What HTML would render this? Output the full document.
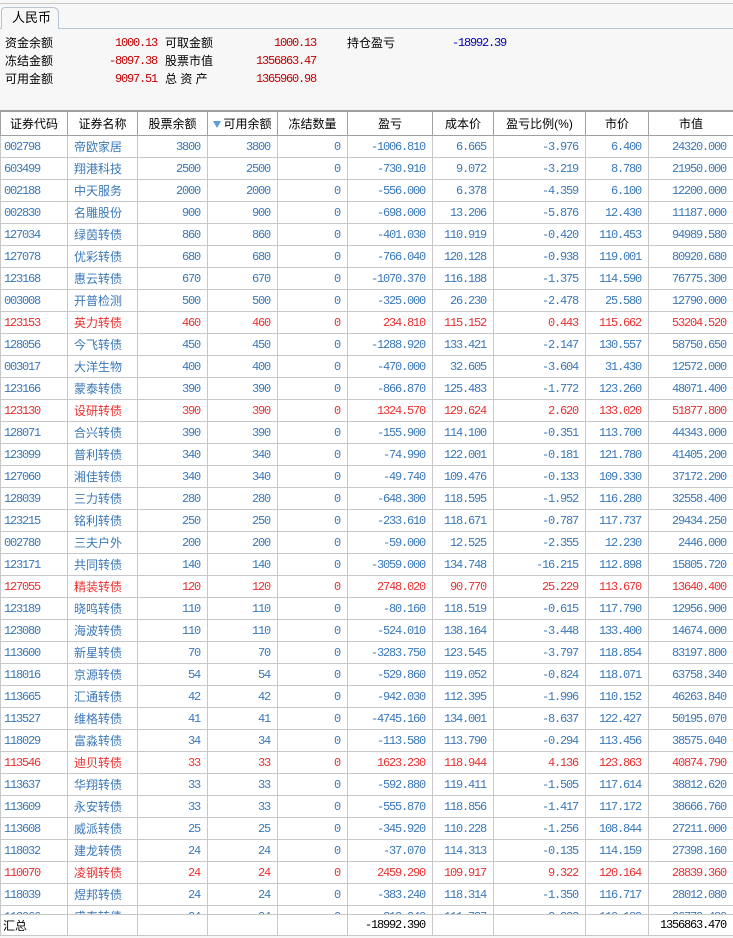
<!DOCTYPE html>
<html><head><meta charset="utf-8">
<style>
*{margin:0;padding:0;box-sizing:border-box}
body{width:733px;height:938px;overflow:hidden;background:#f7f7f7;font-family:"Liberation Sans","Noto Sans CJK SC",sans-serif;position:relative}
.tabline{position:absolute;left:0;top:3px;width:733px;height:1px;background:#c8c8c8}
.tab{position:absolute;left:1px;top:7px;width:58px;height:22px;border:1px solid #b8c4d4;border-bottom:none;border-radius:4px 6px 0 0;background:#f7f7f7;font-size:13px;line-height:20px;padding-left:10px;color:#000}
.tabbase{position:absolute;left:0;top:28px;width:733px;height:1px;background:#b8c4d4}
.s{position:absolute;font-size:12px;line-height:16px;white-space:nowrap}
.v{font-family:"Liberation Mono",monospace;font-size:12px;letter-spacing:-1.2px;color:#c00000;text-align:right}
table{position:absolute;left:0;border-collapse:collapse;table-layout:fixed;background:#fff}
td{height:22px;border:1px solid #c8c8c8;font-family:"Liberation Mono",monospace;font-size:12px;letter-spacing:-1.2px;color:#3a78b8;text-align:right;padding-right:7px;white-space:nowrap;overflow:hidden}
td:nth-child(1){text-align:left;padding-left:3px}
td:nth-child(2){text-align:left;padding-left:6px;font-family:"Liberation Sans","Noto Sans CJK SC",sans-serif;font-size:12px;letter-spacing:0}
tr.r td{color:#e83030}
#hd td{height:24px;background:#fff;color:#000;font-family:"Liberation Sans","Noto Sans CJK SC",sans-serif;font-size:12px;letter-spacing:0;text-align:center;padding:0;border-color:#a0a0a0}
#wrap{position:absolute;left:0;top:111px;width:733px;height:804px;overflow:hidden}
#ft td{height:21px;color:#000;background:#fff}
.tri{display:inline-block;width:0;height:0;border-left:4px solid transparent;border-right:4px solid transparent;border-top:7px solid #5a9ee0;margin-right:2px;vertical-align:0px}
</style></head><body>
<div class="tabline"></div>
<div class="tabbase"></div>
<div class="tab">人民币</div>
<div class="s" style="left:5px;top:35px">资金余额</div>
<div class="s" style="left:5px;top:53px">冻结金额</div>
<div class="s" style="left:5px;top:71px">可用金额</div>
<div class="s v" style="left:80px;width:77px;top:35px">1000.13</div>
<div class="s v" style="left:80px;width:77px;top:53px">-8097.38</div>
<div class="s v" style="left:80px;width:77px;top:71px">9097.51</div>
<div class="s" style="left:165px;top:35px">可取金额</div>
<div class="s" style="left:165px;top:53px">股票市值</div>
<div class="s" style="left:165px;top:71px">总 资 产</div>
<div class="s v" style="left:220px;width:96px;top:35px">1000.13</div>
<div class="s v" style="left:220px;width:96px;top:53px">1356863.47</div>
<div class="s v" style="left:220px;width:96px;top:71px">1365960.98</div>
<div class="s" style="left:347px;top:35px">持仓盈亏</div>
<div class="s v" style="left:440px;width:66px;top:35px;color:#0000b0">-18992.39</div>
<div style="position:absolute;left:0;top:110px;width:733px;height:1px;background:#a0a0a0"></div>
<div id="wrap">
<table style="top:0;width:733px">
<colgroup><col style="width:67px"><col style="width:70px"><col style="width:70px"><col style="width:70px"><col style="width:70px"><col style="width:85px"><col style="width:61px"><col style="width:92px"><col style="width:63px"><col style="width:85px"></colgroup>
<tr id="hd"><td>证券代码</td><td>证券名称</td><td>股票余额</td><td><span class="tri"></span>可用余额</td><td>冻结数量</td><td>盈亏</td><td>成本价</td><td>盈亏比例(%)</td><td>市价</td><td>市值</td></tr>
<tr><td>002798</td><td>帝欧家居</td><td>3800</td><td>3800</td><td>0</td><td>-1006.810</td><td>6.665</td><td>-3.976</td><td>6.400</td><td>24320.000</td></tr>
<tr><td>603499</td><td>翔港科技</td><td>2500</td><td>2500</td><td>0</td><td>-730.910</td><td>9.072</td><td>-3.219</td><td>8.780</td><td>21950.000</td></tr>
<tr><td>002188</td><td>中天服务</td><td>2000</td><td>2000</td><td>0</td><td>-556.000</td><td>6.378</td><td>-4.359</td><td>6.100</td><td>12200.000</td></tr>
<tr><td>002830</td><td>名雕股份</td><td>900</td><td>900</td><td>0</td><td>-698.000</td><td>13.206</td><td>-5.876</td><td>12.430</td><td>11187.000</td></tr>
<tr><td>127034</td><td>绿茵转债</td><td>860</td><td>860</td><td>0</td><td>-401.030</td><td>110.919</td><td>-0.420</td><td>110.453</td><td>94989.580</td></tr>
<tr><td>127078</td><td>优彩转债</td><td>680</td><td>680</td><td>0</td><td>-766.040</td><td>120.128</td><td>-0.938</td><td>119.001</td><td>80920.680</td></tr>
<tr><td>123168</td><td>惠云转债</td><td>670</td><td>670</td><td>0</td><td>-1070.370</td><td>116.188</td><td>-1.375</td><td>114.590</td><td>76775.300</td></tr>
<tr><td>003008</td><td>开普检测</td><td>500</td><td>500</td><td>0</td><td>-325.000</td><td>26.230</td><td>-2.478</td><td>25.580</td><td>12790.000</td></tr>
<tr class="r"><td>123153</td><td>英力转债</td><td>460</td><td>460</td><td>0</td><td>234.810</td><td>115.152</td><td>0.443</td><td>115.662</td><td>53204.520</td></tr>
<tr><td>128056</td><td>今飞转债</td><td>450</td><td>450</td><td>0</td><td>-1288.920</td><td>133.421</td><td>-2.147</td><td>130.557</td><td>58750.650</td></tr>
<tr><td>003017</td><td>大洋生物</td><td>400</td><td>400</td><td>0</td><td>-470.000</td><td>32.605</td><td>-3.604</td><td>31.430</td><td>12572.000</td></tr>
<tr><td>123166</td><td>蒙泰转债</td><td>390</td><td>390</td><td>0</td><td>-866.870</td><td>125.483</td><td>-1.772</td><td>123.260</td><td>48071.400</td></tr>
<tr class="r"><td>123130</td><td>设研转债</td><td>390</td><td>390</td><td>0</td><td>1324.570</td><td>129.624</td><td>2.620</td><td>133.020</td><td>51877.800</td></tr>
<tr><td>128071</td><td>合兴转债</td><td>390</td><td>390</td><td>0</td><td>-155.900</td><td>114.100</td><td>-0.351</td><td>113.700</td><td>44343.000</td></tr>
<tr><td>123099</td><td>普利转债</td><td>340</td><td>340</td><td>0</td><td>-74.990</td><td>122.001</td><td>-0.181</td><td>121.780</td><td>41405.200</td></tr>
<tr><td>127060</td><td>湘佳转债</td><td>340</td><td>340</td><td>0</td><td>-49.740</td><td>109.476</td><td>-0.133</td><td>109.330</td><td>37172.200</td></tr>
<tr><td>128039</td><td>三力转债</td><td>280</td><td>280</td><td>0</td><td>-648.300</td><td>118.595</td><td>-1.952</td><td>116.280</td><td>32558.400</td></tr>
<tr><td>123215</td><td>铭利转债</td><td>250</td><td>250</td><td>0</td><td>-233.610</td><td>118.671</td><td>-0.787</td><td>117.737</td><td>29434.250</td></tr>
<tr><td>002780</td><td>三夫户外</td><td>200</td><td>200</td><td>0</td><td>-59.000</td><td>12.525</td><td>-2.355</td><td>12.230</td><td>2446.000</td></tr>
<tr><td>123171</td><td>共同转债</td><td>140</td><td>140</td><td>0</td><td>-3059.000</td><td>134.748</td><td>-16.215</td><td>112.898</td><td>15805.720</td></tr>
<tr class="r"><td>127055</td><td>精装转债</td><td>120</td><td>120</td><td>0</td><td>2748.020</td><td>90.770</td><td>25.229</td><td>113.670</td><td>13640.400</td></tr>
<tr><td>123189</td><td>晓鸣转债</td><td>110</td><td>110</td><td>0</td><td>-80.160</td><td>118.519</td><td>-0.615</td><td>117.790</td><td>12956.900</td></tr>
<tr><td>123080</td><td>海波转债</td><td>110</td><td>110</td><td>0</td><td>-524.010</td><td>138.164</td><td>-3.448</td><td>133.400</td><td>14674.000</td></tr>
<tr><td>113600</td><td>新星转债</td><td>70</td><td>70</td><td>0</td><td>-3283.750</td><td>123.545</td><td>-3.797</td><td>118.854</td><td>83197.800</td></tr>
<tr><td>118016</td><td>京源转债</td><td>54</td><td>54</td><td>0</td><td>-529.860</td><td>119.052</td><td>-0.824</td><td>118.071</td><td>63758.340</td></tr>
<tr><td>113665</td><td>汇通转债</td><td>42</td><td>42</td><td>0</td><td>-942.030</td><td>112.395</td><td>-1.996</td><td>110.152</td><td>46263.840</td></tr>
<tr><td>113527</td><td>维格转债</td><td>41</td><td>41</td><td>0</td><td>-4745.160</td><td>134.001</td><td>-8.637</td><td>122.427</td><td>50195.070</td></tr>
<tr><td>118029</td><td>富淼转债</td><td>34</td><td>34</td><td>0</td><td>-113.580</td><td>113.790</td><td>-0.294</td><td>113.456</td><td>38575.040</td></tr>
<tr class="r"><td>113546</td><td>迪贝转债</td><td>33</td><td>33</td><td>0</td><td>1623.230</td><td>118.944</td><td>4.136</td><td>123.863</td><td>40874.790</td></tr>
<tr><td>113637</td><td>华翔转债</td><td>33</td><td>33</td><td>0</td><td>-592.880</td><td>119.411</td><td>-1.505</td><td>117.614</td><td>38812.620</td></tr>
<tr><td>113609</td><td>永安转债</td><td>33</td><td>33</td><td>0</td><td>-555.870</td><td>118.856</td><td>-1.417</td><td>117.172</td><td>38666.760</td></tr>
<tr><td>113608</td><td>威派转债</td><td>25</td><td>25</td><td>0</td><td>-345.920</td><td>110.228</td><td>-1.256</td><td>108.844</td><td>27211.000</td></tr>
<tr><td>118032</td><td>建龙转债</td><td>24</td><td>24</td><td>0</td><td>-37.070</td><td>114.313</td><td>-0.135</td><td>114.159</td><td>27398.160</td></tr>
<tr class="r"><td>110070</td><td>凌钢转债</td><td>24</td><td>24</td><td>0</td><td>2459.290</td><td>109.917</td><td>9.322</td><td>120.164</td><td>28839.360</td></tr>
<tr><td>118039</td><td>煜邦转债</td><td>24</td><td>24</td><td>0</td><td>-383.240</td><td>118.314</td><td>-1.350</td><td>116.717</td><td>28012.080</td></tr>
<tr><td>113066</td><td>盛泰转债</td><td>24</td><td>24</td><td>0</td><td>-312.240</td><td>111.727</td><td>-2.223</td><td>110.189</td><td>26772.480</td></tr>
</table>
</div>
<table style="top:914px;width:733px">
<colgroup><col style="width:67px"><col style="width:70px"><col style="width:70px"><col style="width:70px"><col style="width:70px"><col style="width:85px"><col style="width:61px"><col style="width:92px"><col style="width:63px"><col style="width:85px"></colgroup>
<tr id="ft"><td style="font-family:'Liberation Sans','Noto Sans CJK SC',sans-serif;font-size:12px;letter-spacing:0;padding-left:2px">汇总</td><td></td><td></td><td></td><td></td><td>-18992.390</td><td></td><td></td><td></td><td>1356863.470</td></tr>
</table>
</body></html>
